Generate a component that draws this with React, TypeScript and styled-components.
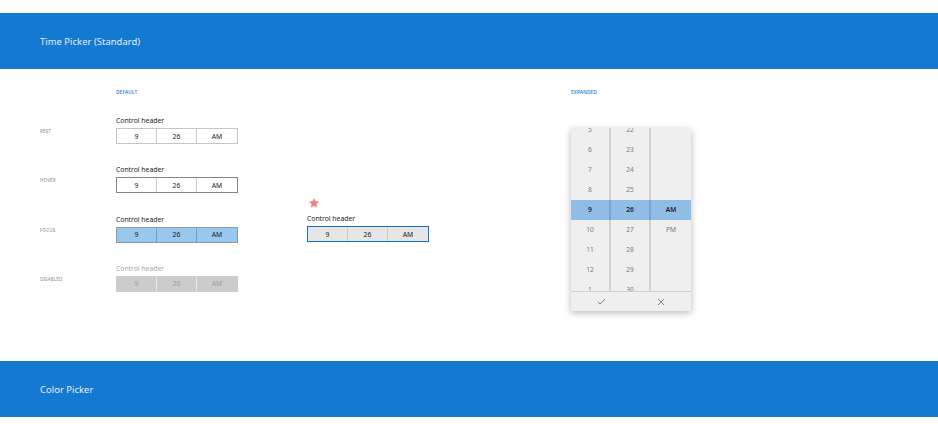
import styled, { createGlobalStyle, css } from "styled-components";

type PickerState = "rest" | "hover" | "focus" | "disabled" | "active";

const GlobalStyle = createGlobalStyle`
  html, body {
    margin: 0;
    padding: 0;
    background: #ffffff;
  }
  body {
    font-family: "Noto Sans", "Open Sans", sans-serif;
  }
`;

const hours = ["5", "6", "7", "8", "9", "10", "11", "12", "1"];
const minutes = ["22", "23", "24", "25", "26", "27", "28", "29", "30"];
const periods = ["", "", "", "", "AM", "PM", "", "", ""];
const SELECTED = 4;

const states: { label: string; state: PickerState }[] = [
  { label: "REST", state: "rest" },
  { label: "HOVER", state: "hover" },
  { label: "FOCUS", state: "focus" },
  { label: "DISABLED", state: "disabled" },
];

const TimePicker = ({ state }: { state: PickerState }) => (
  <PickerGroup>
    <ControlHeader disabled={state === "disabled"}>Control header</ControlHeader>
    <PickerBox state={state}>
      <PickerCell state={state}>9</PickerCell>
      <PickerCell state={state}>26</PickerCell>
      <PickerCell state={state}>AM</PickerCell>
    </PickerBox>
  </PickerGroup>
);

const App = () => {
  return (
    <Page>
      <GlobalStyle />
      <Band>
        <BandTitle>Time Picker (Standard)</BandTitle>
      </Band>

      <Content>
        <SectionLabel col={2}>DEFAULT</SectionLabel>
        <SectionLabel col={4}>EXPANDED</SectionLabel>

        {states.map((s, i) => (
          <StateRow key={s.label} row={i + 2}>
            <StateLabel>{s.label}</StateLabel>
            <TimePicker state={s.state} />
          </StateRow>
        ))}

        <FocusedCell>
          <Star viewBox="0 0 24 24">
            <path d="M12 1.8l3.1 6.6 7.2.8-5.4 4.9 1.5 7.1L12 17.6l-6.4 3.6 1.5-7.1L1.7 9.2l7.2-.8z" />
          </Star>
          <TimePicker state="active" />
        </FocusedCell>

        <Flyout>
          <FlyoutList>
            {hours.map((h, i) => (
              <FlyoutRow key={h + i} selected={i === SELECTED}>
                <FlyoutCell selected={i === SELECTED}>{h}</FlyoutCell>
                <FlyoutCell selected={i === SELECTED}>{minutes[i]}</FlyoutCell>
                <FlyoutCell selected={i === SELECTED} last>
                  {periods[i]}
                </FlyoutCell>
              </FlyoutRow>
            ))}
          </FlyoutList>
          <FlyoutFooter>
            <FooterButton>
              <svg width="9" height="9" viewBox="0 0 16 16">
                <path d="M1.5 8.5l4 4 9-9" fill="none" stroke="#555" strokeWidth="1.3" />
              </svg>
            </FooterButton>
            <FooterButton>
              <svg width="8" height="8" viewBox="0 0 16 16">
                <path d="M2 2l12 12M14 2L2 14" fill="none" stroke="#555" strokeWidth="1.4" />
              </svg>
            </FooterButton>
          </FlyoutFooter>
        </Flyout>
      </Content>

      <Band>
        <BandTitle>Color Picker</BandTitle>
      </Band>
    </Page>
  );
};

const Page = styled.div`
  width: 938px;
  height: 438px;
  padding-top: 13px;
  box-sizing: border-box;
  overflow: hidden;
  display: flex;
  flex-direction: column;
`;

const Band = styled.div`
  height: 56px;
  flex: none;
  background: #1479d0;
  display: flex;
  align-items: center;
  padding-left: 40px;
`;

const BandTitle = styled.span`
  color: #e4eef9;
  font-size: 9.4px;
  letter-spacing: 0.05px;
`;

const Content = styled.div`
  height: 292px;
  flex: none;
  padding-left: 40px;
  display: grid;
  grid-template-columns: 76px 191px 264px 1fr;
  grid-template-rows: 47px repeat(4, 49.33px) 1fr;
`;

const SectionLabel = styled.div<{ col: number }>`
  grid-column: ${(p) => p.col};
  grid-row: 1;
  padding-top: 20px;
  font-size: 4.8px;
  line-height: 6px;
  font-weight: 600;
  color: #2f86d6;
  letter-spacing: 0.1px;
`;

const StateRow = styled.div<{ row: number }>`
  grid-column: 1 / span 2;
  grid-row: ${(p) => p.row};
  display: grid;
  grid-template-columns: 76px 1fr;
`;

const StateLabel = styled.div`
  padding-top: 12px;
  font-size: 4.6px;
  line-height: 6px;
  color: #8a8a8a;
  letter-spacing: 0.1px;
`;

const PickerGroup = styled.div`
  display: flex;
  flex-direction: column;
  gap: 2px;
`;

const ControlHeader = styled.div<{ disabled?: boolean }>`
  font-size: 6.8px;
  line-height: 10px;
  color: ${(p) => (p.disabled ? "#a6a6a6" : "#1a1a1a")};
`;

const boxStyles: Record<PickerState, ReturnType<typeof css>> = {
  rest: css`
    background: #ffffff;
    border: 1.5px solid #c4c4c4;
  `,
  hover: css`
    background: #ffffff;
    border: 1.5px solid #858585;
  `,
  focus: css`
    background: #99c8ee;
    border: 1px solid #8c9aa6;
  `,
  disabled: css`
    background: #cccccc;
    border: 1px solid #cccccc;
  `,
  active: css`
    background: #e6e6e6;
    border: 1.5px solid #0b74d1;
  `,
};

const PickerBox = styled.div<{ state: PickerState }>`
  width: 122px;
  height: 16px;
  box-sizing: border-box;
  display: grid;
  grid-template-columns: 1fr 1fr 1fr;
  ${(p) => boxStyles[p.state]}
`;

const PickerCell = styled.div<{ state: PickerState }>`
  display: flex;
  align-items: center;
  justify-content: center;
  font-size: 6.8px;
  color: ${(p) => (p.state === "disabled" ? "#9e9e9e" : "#1a1a1a")};
  border-right: 1px solid
    ${(p) =>
      p.state === "disabled"
        ? "#e8e8e8"
        : p.state === "focus"
        ? "#7f9ab0"
        : "#cacaca"};
  &:last-child {
    border-right: none;
  }
`;

const FocusedCell = styled.div`
  grid-column: 3;
  grid-row: 3 / span 2;
  padding-top: 32px;
  display: flex;
  flex-direction: column;
  align-items: flex-start;
  gap: 5px;
`;

const Star = styled.svg`
  width: 12px;
  height: 12px;
  margin-left: 1px;
  fill: #f08080;
`;

const Flyout = styled.div`
  grid-column: 4;
  grid-row: 2 / span 5;
  align-self: start;
  margin-top: 12px;
  width: 120px;
  height: 183px;
  background: #efefef;
  box-shadow: 0 2px 7px rgba(0, 0, 0, 0.28);
  display: flex;
  flex-direction: column;
`;

const FlyoutList = styled.div`
  height: 163px;
  overflow: hidden;
  display: flex;
  flex-direction: column;
  justify-content: center;
`;

const FlyoutRow = styled.div<{ selected?: boolean }>`
  flex: none;
  height: 20px;
  display: grid;
  grid-template-columns: 40px 40px 40px;
  background: ${(p) => (p.selected ? "#8fbde6" : "transparent")};
`;

const FlyoutCell = styled.div<{ selected?: boolean; last?: boolean }>`
  display: flex;
  align-items: center;
  justify-content: center;
  font-size: 6.6px;
  font-weight: ${(p) => (p.selected ? 600 : 400)};
  color: ${(p) => (p.selected ? "#222" : "#7a7a7a")};
  box-sizing: border-box;
  border-right: ${(p) => (p.last ? "none" : "2px solid rgba(0, 0, 0, 0.12)")};
`;

const FlyoutFooter = styled.div`
  flex: 1;
  border-top: 1px solid #cfcfcf;
  display: grid;
  grid-template-columns: 1fr 1fr;
`;

const FooterButton = styled.div`
  display: flex;
  align-items: center;
  justify-content: center;
`;

export default App;
